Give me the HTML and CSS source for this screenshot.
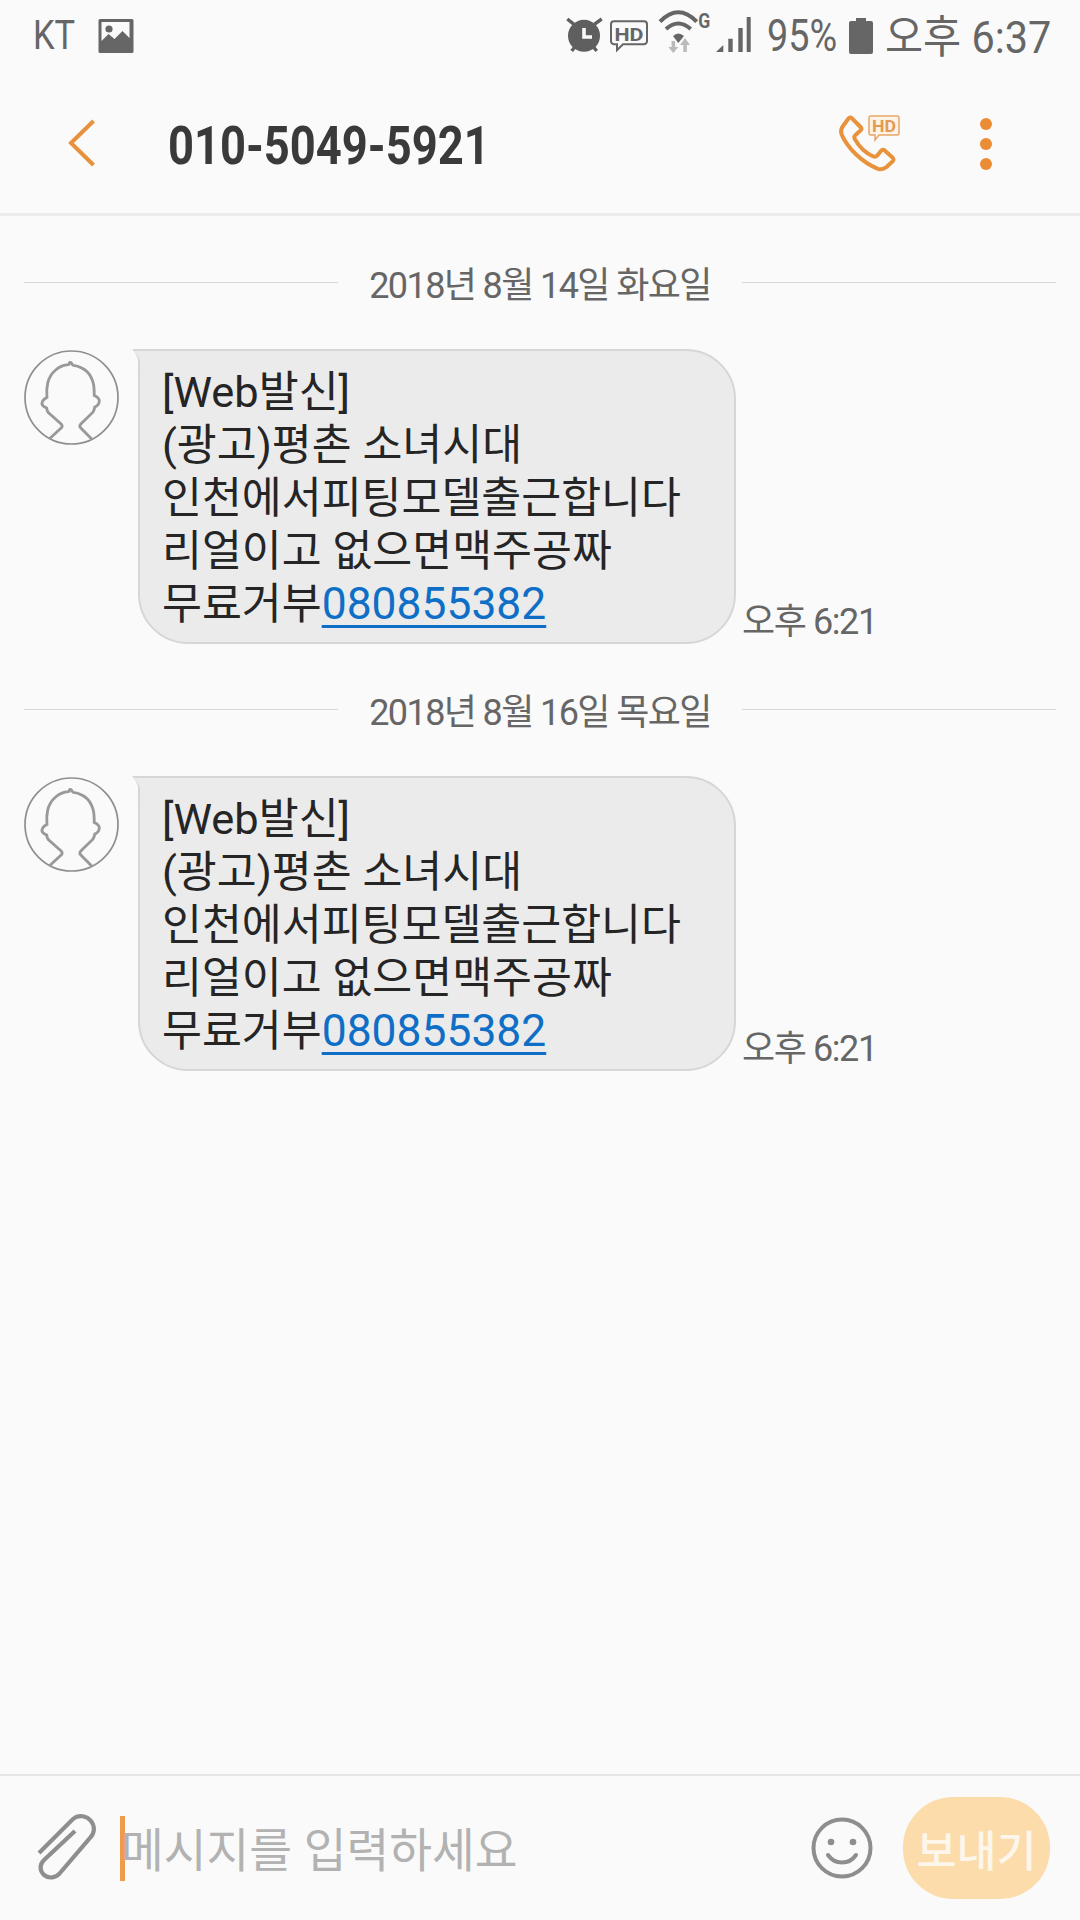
FILE: index.html
```html
<!DOCTYPE html>
<html lang="ko">
<head>
<meta charset="utf-8">
<title>메시지</title>
<link rel="stylesheet" href="styles.css">
</head>
<body>
<div class="screen">
  <div class="status">
    <div class="status-left">
      <span class="carrier">KT</span>
      <svg class="ic-gallery" viewBox="0 0 36 36"><path fill="#666" fill-rule="evenodd" d="M2 1h32a1.500 1.500 0 0 1 1.500 1.500v31a1.500 1.500 0 0 1-1.500 1.500H2a1.500 1.500 0 0 1-1.500-1.500v-31A1.500 1.500 0 0 1 2 1zm1.500 3v19l7-7 6 5 8-8 7 7V4z"/><circle cx="11" cy="11" r="3.600" fill="#666"/></svg>
    </div>
    <div class="status-right">
      <svg class="ic-alarm" viewBox="0 0 36 36"><circle cx="18" cy="17.700" r="16" fill="#5f5f5f"/><path d="M1.300 1L8 6.300M35.700 1L28.300 6.300M5.700 33L9 28.700M30.700 33L27.300 28.700" stroke="#5f5f5f" stroke-width="3.400" fill="none"/><path d="M18 10v9h8" stroke="#fafafa" stroke-width="3.600" fill="none"/></svg>
      <svg class="ic-hd" viewBox="0 0 38 33"><path d="M4 1.200h30a3 3 0 0 1 3 3v17a3 3 0 0 1-3 3H13l-6 6v-6H4a3 3 0 0 1-3-3v-17a3 3 0 0 1 3-3z" fill="none" stroke="#666" stroke-width="2"/><text class="hd-status" x="4.500" y="20.500" textLength="29" lengthAdjust="spacingAndGlyphs">HD</text></svg>
      <svg class="ic-wifi" viewBox="0 0 52 52"><path d="M0 11.700Q18.300-7 36.700 11.700" stroke="#666" stroke-width="4" fill="none"/><path d="M6 19Q18.300 8 30.700 19" stroke="#666" stroke-width="4" fill="none"/><path d="M13 26Q18.300 21 24 26L18.300 33z" fill="#666"/><path d="M11.600 31h3.500v6h3.200l-5 6-5-6h3.300z" fill="#bbb"/><path d="M25 28l5 7h-3.200v7h-3.500v-7H20z" fill="#bbb"/><text class="g-mark" x="38.300" y="18" textLength="12" lengthAdjust="spacingAndGlyphs">G</text></svg>
      <svg class="ic-signal" viewBox="0 0 35 38"><path d="M0 35l7.300-7v7zM12.300 21.700h4.400V35h-4.400zM22.300 11h4.400v24h-4.400zM30.700 0h4v35h-4z" fill="#666"/></svg>
      <span class="battery-text">95%</span>
      <svg class="ic-battery" viewBox="0 0 24 36"><path d="M7 0h10v3h5a2 2 0 0 1 2 2v29a2 2 0 0 1-2 2H2a2 2 0 0 1-2-2V5a2 2 0 0 1 2-2h5z" fill="#666"/></svg>
      <span class="clock">오후 6:37</span>
    </div>
  </div>

  <header class="topbar">
    <svg class="ic-back" viewBox="0 0 28 48"><path d="M25.500 2L3 24l22.500 22" fill="none" stroke="#e8913c" stroke-width="4"/></svg>
    <h1 class="title"><span class="title-text">010-5049-5921</span></h1>
    <svg class="ic-call" viewBox="0 0 62 58">
      <path d="M9.500 3.500c1-1.200 2.500-1.200 3.500-.2l8.500 8.700c1 1 1 2.500 0 3.500l-5 4.500c-1.200 1-1.500 2.500-.7 4 4.500 8 10.500 14 18.500 17.500 1.500.6 2.800.3 3.800-.8l4-5c1-1.200 2.600-1.200 3.600-.2l7.800 7c1.300 1.200 1.300 2.800 0 4l-6 5.500c-2.500 2-5.500 2.700-8.500 1.800C24 48 8 33 2.500 19c-1-3-.5-5.500 1.500-8z" fill="none" stroke="#e8933c" stroke-width="4" stroke-linejoin="round"/>
      <path d="M32 1h26a2 2 0 0 1 2 2v15a2 2 0 0 1-2 2H40l-4 5v-5h-4a2 2 0 0 1-2-2V3a2 2 0 0 1 2-2z" fill="#fdf3e7" stroke="#e6a76a" stroke-width="1.500"/>
      <text class="hd-mark" x="33" y="17" textLength="24" lengthAdjust="spacingAndGlyphs">HD</text>
    </svg>
    <div class="dots"><i></i><i></i><i></i></div>
  </header>

  <main class="thread">
    <section class="day">
      <div class="date-row"><span class="rule"></span><span class="date">2018년 8월 14일 화요일</span><span class="rule"></span></div>
      <div class="msg">
        <svg class="avatar" viewBox="0 0 94 94"><circle cx="47" cy="47" r="46" fill="none" stroke="#8f8f8f" stroke-width="1.700"/><path d="M25 88l12-11c1-1.200 1-2.300 0-3.500L24 62c-1-1.500-1.500-3-1.500-4.500C19 56 17 54 18 51.500c.7-2 2.500-3.500 4.700-4.500-.4-5-.3-10 .8-14.500C26 22 35 15 44 14.500c1.500-.1 0-2.500 2-2.300 1.500.2 1 2.500 3 3C60 17 67 24 69 35c.5 3.500.5 7 .5 10 2.500 1 5 3 5 5.500s-2 5-4.500 6c-.2 2-.8 3.500-1.800 5L56 73.500c-1 1.200-1 2.300 0 3.500l11 11" fill="none" stroke="#999" stroke-width="2.800"/></svg>
        <div class="bubble">
          <p>[Web발신]<br>(광고)평촌 소녀시대<br>인천에서피팅모델출근합니다<br>리얼이고 없으면맥주공짜<br>무료거부<a class="link">080855382</a></p>
        </div>
        <span class="time">오후 6:21</span>
      </div>
    </section>
    <section class="day">
      <div class="date-row"><span class="rule"></span><span class="date">2018년 8월 16일 목요일</span><span class="rule"></span></div>
      <div class="msg">
        <svg class="avatar" viewBox="0 0 94 94"><circle cx="47" cy="47" r="46" fill="none" stroke="#8f8f8f" stroke-width="1.700"/><path d="M25 88l12-11c1-1.200 1-2.300 0-3.500L24 62c-1-1.500-1.500-3-1.500-4.500C19 56 17 54 18 51.500c.7-2 2.500-3.500 4.700-4.500-.4-5-.3-10 .8-14.500C26 22 35 15 44 14.500c1.500-.1 0-2.500 2-2.300 1.500.2 1 2.500 3 3C60 17 67 24 69 35c.5 3.500.5 7 .5 10 2.500 1 5 3 5 5.500s-2 5-4.500 6c-.2 2-.8 3.500-1.800 5L56 73.500c-1 1.200-1 2.300 0 3.500l11 11" fill="none" stroke="#999" stroke-width="2.800"/></svg>
        <div class="bubble">
          <p>[Web발신]<br>(광고)평촌 소녀시대<br>인천에서피팅모델출근합니다<br>리얼이고 없으면맥주공짜<br>무료거부<a class="link">080855382</a></p>
        </div>
        <span class="time">오후 6:21</span>
      </div>
    </section>
  </main>

  <footer class="composer">
    <svg class="ic-clip" viewBox="0 0 60 66"><path d="M2 38L36 4c6-5 14-3 18 2 4 5 4 12-1 17L23 58c-4 5-11 6-16 2-5-5-4-11 0-15L38 16" fill="none" stroke="#8e8e8e" stroke-width="4.200"/></svg>
    <div class="field"><span class="caret"></span><span class="placeholder">메시지를 입력하세요</span></div>
    <svg class="ic-smile" viewBox="0 0 62 62"><circle cx="31" cy="31" r="28.500" fill="none" stroke="#8e8e8e" stroke-width="4"/><circle cx="20" cy="25" r="3.300" fill="#8e8e8e"/><circle cx="42" cy="25" r="3.300" fill="#8e8e8e"/><path d="M17 38c7 10 21 10 28 0" fill="none" stroke="#8e8e8e" stroke-width="4" stroke-linecap="round"/></svg>
    <div class="send">보내기</div>
  </footer>
</div>
</body>
</html>
```

FILE: styles.css
```css
* { box-sizing: border-box; }
html, body { margin: 0; padding: 0; }
body { background: #fafafa; font-family: Roboto, "Noto Sans CJK KR", sans-serif; }
svg { overflow: visible; }
.screen { width: 1080px; height: 1920px; display: flex; flex-direction: column; background: #fafafa; overflow: hidden; }

.status { height: 72px; display: flex; justify-content: space-between; align-items: center; padding: 0 29px 0 33px; color: #666; }
.status-left { display: flex; align-items: center; }
.carrier { width: 40px; font-size: 41px; white-space: nowrap; margin-bottom: 2px; transform: scaleX(.84); transform-origin: left center; }
.ic-gallery { width: 36px; height: 36px; margin-left: 25px; }
.status-right { display: flex; align-items: center; }
.ic-alarm { width: 36px; height: 36px; }
.ic-hd { width: 38px; height: 33px; margin-left: 8px; }
.ic-wifi { width: 52px; height: 52px; margin-left: 12px; }
.ic-signal { width: 35px; height: 38px; margin-left: 4px; }
.hd-status { font: 700 19px Roboto, sans-serif; fill: #666; }
.g-mark { font: 700 21px Roboto, sans-serif; fill: #666; }
.battery-text { width: 70px; font-size: 45px; white-space: nowrap; margin: 0 0 2px 16px; transform: scaleX(.84); transform-origin: left center; }
.ic-battery { width: 24px; height: 36px; margin-left: 12px; }
.clock { width: 166px; font-size: 45px; white-space: nowrap; margin: 0 0 5px 12px; transform: scaleX(.92); transform-origin: left center; }

.topbar { height: 144px; display: flex; align-items: center; padding: 0 0 0 68px; border-bottom: 3px solid #ececec; }
.ic-back { width: 28px; height: 48px; flex: none; }
.title { margin: 6px 0 0 72px; font-size: 53px; font-weight: 700; color: #3a3a3a; flex: 1; white-space: nowrap; }
.title-text { display: inline-block; transform: scaleX(.855); transform-origin: left center; }
.ic-call { width: 62px; height: 58px; flex: none; margin-top: 2px; }
.hd-mark { font: 700 17px Roboto, sans-serif; fill: #e59a52; }
.dots { width: 12px; margin: 2px 88px 0 79px; display: flex; flex-direction: column; gap: 8px; }
.dots i { width: 12px; height: 12px; border-radius: 50%; background: #ea8d36; }

.thread { flex: 1; display: flex; flex-direction: column; padding: 0 24px; }
.day { display: flex; flex-direction: column; }
.date-row { height: 66px; margin-top: 33px; display: flex; align-items: center; gap: 31px; }
.day + .day .date-row { margin-top: 32px; }
.rule { flex: 1; height: 1px; background: #d8d8d8; }
.date { font-size: 36px; color: #666; letter-spacing: -1.600px; white-space: nowrap; }
.msg { display: flex; align-items: flex-end; margin-top: 34px; }
.avatar { width: 95px; height: 95px; flex: none; align-self: flex-start; margin-top: 1px; }
.bubble { position: relative; width: 598px; height: 295px; margin-left: 19px; padding: 15px 0 0 22px; background: #ebebeb; border: 2px solid #d6d6d6; border-radius: 0 50px 50px 50px; color: #252525; font-size: 43.400px; line-height: 53px; }
.bubble::before, .bubble::after { content: ""; position: absolute; width: 8px; height: 26px; clip-path: path("M0 0H8V26C8 13 5 5 0 0Z"); }
.bubble::before { left: -8px; top: -2px; background: #d6d6d6; }
.bubble::after { left: -6px; top: 0; background: #ebebeb; }
.bubble p { margin: 0; white-space: nowrap; }
.link { color: #0f6fc6; font-size: 44.400px; text-decoration: underline; text-decoration-thickness: 3px; text-underline-offset: 6px; }
.time { font-size: 36px; color: #666; letter-spacing: -1.400px; margin: 0 0 0 6px; white-space: nowrap; }

.composer { height: 146px; border-top: 2px solid #e6e6e6; display: flex; align-items: center; padding-left: 37px; }
.ic-clip { width: 60px; height: 66px; flex: none; }
.field { display: flex; align-items: center; flex: 1; margin-left: 23px; position: relative; }
.caret { width: 5px; height: 65px; background: #ee9b4b; flex: none; }
.placeholder { font-size: 46.500px; color: #b2b2b2; white-space: nowrap; margin: 0 0 4px -4px; }
.ic-smile { width: 62px; height: 62px; flex: none; }
.send { width: 147px; height: 102px; margin: 0 30px 0 30px; border-radius: 50px; background: #fbdcaa; color: #fdf6ea; font-size: 43.500px; font-weight: 500; display: flex; align-items: center; justify-content: center; flex: none; }
```
